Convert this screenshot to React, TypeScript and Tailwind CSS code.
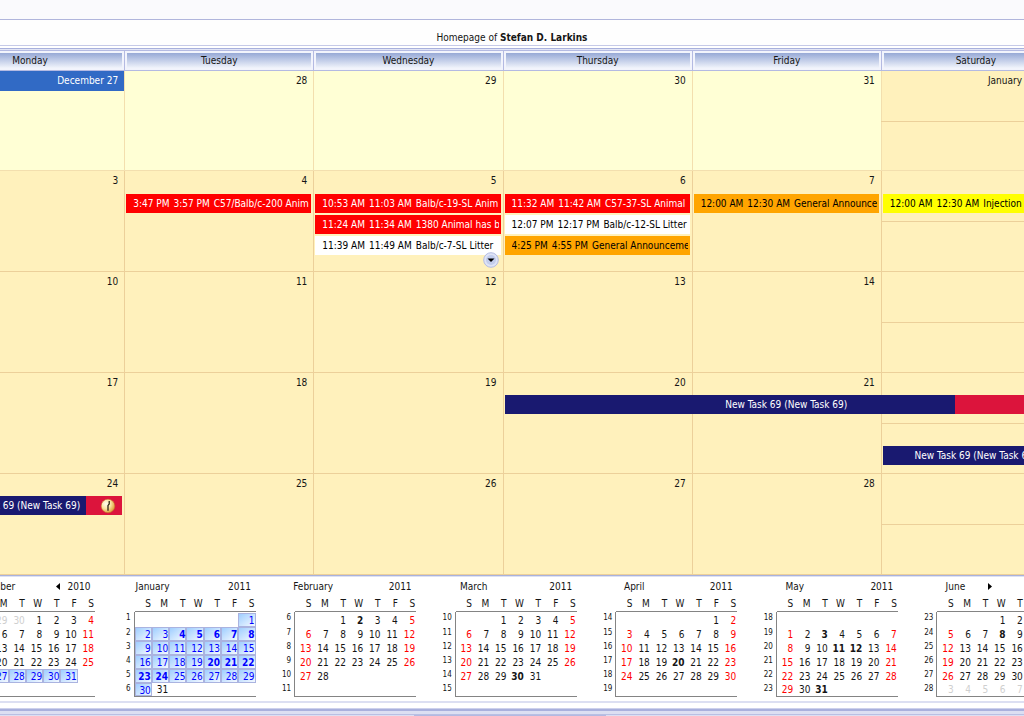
import clsx from "clsx";

type CalendarEvent = { start: string; end: string; title: string; tone: string };
type Day = { label: string; today?: boolean; events?: CalendarEvent[]; more?: boolean };

const RED = "bg-[#ff0000] text-white";
const WHITE = "bg-white text-black";
const ORANGE = "bg-[#ffa500] text-black";
const YELLOW = "bg-[#ffff00] text-black";

const weekdays = ["Monday", "Tuesday", "Wednesday", "Thursday", "Friday", "Saturday"];
const colStart = ["col-start-1", "col-start-2", "col-start-3", "col-start-4", "col-start-5", "col-start-6"];

const weeks: Day[][] = [
  [
    { label: "December 27", today: true },
    { label: "28" },
    { label: "29" },
    { label: "30" },
    { label: "31" },
    { label: "January" },
  ],
  [
    { label: "3" },
    { label: "4", events: [{ start: "3:47 PM", end: "3:57 PM", title: "C57/Balb/c-200 Anim", tone: RED }] },
    {
      label: "5",
      more: true,
      events: [
        { start: "10:53 AM", end: "11:03 AM", title: "Balb/c-19-SL Anim", tone: RED },
        { start: "11:24 AM", end: "11:34 AM", title: "1380 Animal has b", tone: RED },
        { start: "11:39 AM", end: "11:49 AM", title: "Balb/c-7-SL Litter", tone: WHITE },
      ],
    },
    {
      label: "6",
      events: [
        { start: "11:32 AM", end: "11:42 AM", title: "C57-37-SL Animal", tone: RED },
        { start: "12:07 PM", end: "12:17 PM", title: "Balb/c-12-SL Litter", tone: WHITE },
        { start: "4:25 PM", end: "4:55 PM", title: "General Announceme", tone: ORANGE },
      ],
    },
    { label: "7", events: [{ start: "12:00 AM", end: "12:30 AM", title: "General Announce", tone: ORANGE }] },
    { label: "", events: [{ start: "12:00 AM", end: "12:30 AM", title: "Injection", tone: YELLOW }] },
  ],
  [{ label: "10" }, { label: "11" }, { label: "12" }, { label: "13" }, { label: "14" }, { label: "" }],
  [{ label: "17" }, { label: "18" }, { label: "19" }, { label: "20" }, { label: "21" }, { label: "" }],
  [{ label: "24" }, { label: "25" }, { label: "26" }, { label: "27" }, { label: "28" }, { label: "" }],
];

type Month = {
  name: string;
  year: string;
  // cell of the first day; 7 leaves the first row empty
  first: number;
  days: number;
  firstWeek: number;
  bold?: number[];
  selected?: [number, number];
  arrow?: "prev" | "next";
  // days of the neighbouring months, drawn in grey
  before?: number[];
  after?: number[];
};

const months: Month[] = [
  { name: "December", year: "2010", first: 3, days: 31, firstWeek: 49, selected: [27, 31], arrow: "prev", before: [28, 29, 30] },
  { name: "January", year: "2011", first: 6, days: 31, firstWeek: 1, selected: [1, 30], bold: [4, 5, 6, 7, 8, 20, 21, 22, 23, 24] },
  { name: "February", year: "2011", first: 2, days: 28, firstWeek: 6, bold: [2] },
  { name: "March", year: "2011", first: 2, days: 31, firstWeek: 10, bold: [30] },
  { name: "April", year: "2011", first: 5, days: 30, firstWeek: 14, bold: [20] },
  { name: "May", year: "2011", first: 7, days: 31, firstWeek: 18, bold: [3, 11, 12, 31] },
  { name: "June", year: "2011", first: 3, days: 30, firstWeek: 23, bold: [8], arrow: "next", after: [3, 4, 5, 6, 7, 8, 9] },
];

function EventBar({ event }: { event: CalendarEvent }) {
  return (
    <button className={clsx("block h-[19px] w-full pl-[7px] pr-0.5 text-left", event.tone)}>
      <span className="flex gap-1 overflow-hidden whitespace-nowrap leading-[19px]">
        <span>{event.start}</span>
        <span>{event.end}</span>
        <span>{event.title}</span>
      </span>
    </button>
  );
}

function DayCell({ day, col, december }: { day: Day; col: number; december: boolean }) {
  const saturday = col === 5;
  return (
    <div
      className={clsx(
        "relative row-start-1 flex min-w-0 flex-col border-b border-l",
        colStart[col],
        december ? "border-[#f3dfae]" : "border-[#ecd09a]",
        december && !saturday ? "bg-[#ffffd5]" : "bg-[#fff1bc]"
      )}
    >
      <div
        className={clsx(
          "h-5 text-right leading-[19px]",
          day.today && "bg-[#316ac5] text-white",
          saturday ? "pr-12" : "pr-1.5"
        )}
      >
        {day.label}
      </div>
      {day.events && (
        <div className="mt-[3px] flex flex-col gap-0.5 pl-px pr-0.5">
          {day.events.map((e) => (
            <EventBar key={e.start} event={e} />
          ))}
        </div>
      )}
      {day.more && (
        <button aria-label="More events" className="absolute bottom-[3px] right-1 size-4">
          <svg viewBox="0 0 16 16" className="size-4">
            <circle cx="8" cy="8" r="7.3" fill="#dfe4f6" stroke="#b4bce2" />
            <circle cx="8" cy="8" r="5" fill="#c3cdec" />
            <path d="M4.5 6.5h7L8 10z" fill="#000" />
          </svg>
        </button>
      )}
    </div>
  );
}

function Week({ days, index }: { days: Day[]; index: number }) {
  const december = index === 0;
  return (
    <div className={clsx("grid grid-cols-6 grid-rows-1", december ? "h-[100px]" : "h-[101px]")}>
      {days.map((d, i) => (
        <DayCell key={i} day={d} col={i} december={december} />
      ))}
      {/* Saturday shares its column with Sunday */}
      <div className="pointer-events-none z-10 col-start-6 row-start-1 mt-[50px] h-px bg-[#ecd09a]" />
      {index === 3 && (
        <>
          <button className="z-10 col-span-3 col-start-4 row-start-1 mx-0.5 mt-[22px] grid h-[19px] grid-cols-[80%_20%] items-stretch bg-[#dc143c] text-white">
            <span className="col-start-1 row-start-1 bg-[#191970]" />
            <span className="col-span-2 col-start-1 row-start-1 text-center leading-[19px]">New Task 69 (New Task 69)</span>
          </button>
          <button className="z-10 col-start-6 row-start-1 mx-0.5 mt-[73px] h-[19px] bg-[#191970] text-center leading-[19px] text-white">
            New Task 69 (New Task 69)
          </button>
        </>
      )}
      {index === 4 && (
        <button className="z-10 col-start-1 row-start-1 mr-0.5 mt-[22px] flex h-[19px] bg-[#191970] text-white">
          <span className="min-w-0 flex-1 pr-1.5 text-right leading-[19px]">New Task 69 (New Task 69)</span>
          <span className="flex h-full w-9 items-center justify-center bg-[#dc143c] pl-2">
            <svg viewBox="0 0 16 16" className="size-4">
              <defs>
                <radialGradient id="clock-face" cx=".35" cy=".35" r=".7">
                  <stop offset="0" stopColor="#fffdf0" />
                  <stop offset=".5" stopColor="#fbe3a0" />
                  <stop offset="1" stopColor="#dc9a35" />
                </radialGradient>
              </defs>
              <circle cx="8" cy="8" r="6.8" fill="url(#clock-face)" stroke="#c07a2c" strokeWidth=".5" />
              <path d="M9.2 3v3L8 7.5v5.2" fill="none" stroke="#1c1608" strokeWidth="1.2" />
            </svg>
          </span>
        </button>
      )}
    </div>
  );
}

function MiniMonth({ month }: { month: Month }) {
  const rows = Array.from({ length: 6 }, (_, r) => Array.from({ length: 7 }, (_, c) => r * 7 + c - month.first + 1));
  return (
    <div className="w-[140px]">
      <div className="flex h-[19px] items-center pl-[7px]">
        <span className="flex w-[60px] justify-center">{month.name}</span>
        <span className="flex w-2.5 justify-center">
          {month.arrow === "next" && (
            <button aria-label="Next month">
              <svg viewBox="0 0 4 7" className="h-[7px] w-1">
                <path d="M0 0v7l4-3.5z" />
              </svg>
            </button>
          )}
        </span>
        <span className="flex flex-1 justify-end pr-[3px]">
          {month.arrow === "prev" && (
            <button aria-label="Previous month">
              <svg viewBox="0 0 4 7" className="h-[7px] w-1">
                <path d="M4 0v7L0 3.5z" />
              </svg>
            </button>
          )}
        </span>
        <span className="w-8 text-center">{month.year}</span>
      </div>
      <table className="w-full table-fixed border-separate border-spacing-0">
        <thead>
          <tr className="h-4">
            <th className="w-[19px] p-0" />
            {["S", "M", "T", "W", "T", "F", "S"].map((d, i) => (
              <th key={i} className="border-b border-[#848484] p-0 pr-px text-right font-normal leading-[15px]">
                {d}
              </th>
            ))}
          </tr>
        </thead>
        <tbody>
          {rows.map((row, r) => (
            <tr key={r} className={r === 0 ? "h-[15px]" : "h-3.5"}>
              <th className="border-r border-[#848484] p-0 pr-[3px] text-right align-top text-[8px] font-normal leading-[11px]">
                {month.firstWeek + r}
              </th>
              {row.map((n, c) => {
                const inside = n >= 1 && n <= month.days;
                const selected = !!month.selected && n >= month.selected[0] && n <= month.selected[1];
                const other = n < 1 ? month.before?.[c] : r === 5 ? month.after?.[c] : undefined;
                const weekend = c === 0 || c === 6;
                return (
                  <td
                    key={c}
                    className={clsx(
                      "p-0 text-right align-bottom",
                      r === 5 && "border-b border-b-[#848484]",
                      inside && month.bold?.includes(n) && "font-bold",
                      !inside && "text-[#cfcfcf]",
                      inside && !selected && weekend && "text-[#ff0000]",
                      selected && "text-[#0000ff]"
                    )}
                  >
                    {selected ? (
                      <span
                        className={clsx(
                          "block border border-[#aab3e0] bg-linear-to-br from-[#9fceff] to-[#f4f9ff] leading-[13px]",
                          r === 5 ? "h-[13px]" : "h-3.5"
                        )}
                      >
                        {n}
                      </span>
                    ) : (
                      <span className={clsx("block pr-px", r === 5 ? "h-[13px] leading-[13px]" : "h-3.5 leading-[15px]")}>
                        {inside ? n : other}
                      </span>
                    )}
                  </td>
                );
              })}
            </tr>
          ))}
        </tbody>
      </table>
    </div>
  );
}

export default function App() {
  return (
    <div className="w-full overflow-hidden bg-white font-['DejaVu_Sans_Condensed','DejaVu_Sans',sans-serif] text-[10px] text-[#151515]">
      <div className="h-5 border-b border-[#b0b5dc] bg-[#fafafd]" />
      <h1 className="h-[26px] border-b border-[#c6cae8] bg-[#fefefe] text-center leading-[36px]">
        Homepage of <b>Stefan D. Larkins</b>
      </h1>
      <div className="mt-0.5 h-0.5 border-t border-[#a8b0dc] bg-[#e3e6f6]" />

      <main className="-ml-[65px] -mr-[46px]">
        <div className="grid h-[21px] grid-cols-6">
          {weekdays.map((d) => (
            <div key={d} className="border border-r-0 border-[#b4bae2] bg-[#f2f4fc] p-0.5">
              <div className="h-full bg-linear-to-b from-[#97a9d6] to-[#f1f4fb] text-center leading-[15px]">{d}</div>
            </div>
          ))}
        </div>
        {weeks.map((days, i) => (
          <Week key={i} days={days} index={i} />
        ))}
      </main>

      <div className="h-0.5 border-t border-[#a9b2dc] bg-[#dde1f3]" />
      <section className="-ml-[45px] -mr-[55px] grid grid-cols-7 pb-1">
        {months.map((m) => (
          <MiniMonth key={m.name} month={m} />
        ))}
      </section>
      <div className="h-0.5 bg-[#dcdff2]" />
      <div className="mt-[5px] h-[3px] border-t border-[#cdd1ec] bg-[#a9b0dd]" />
      <div className="h-1 border-b border-[#b9bfe3] bg-[#dcdff2]" />
      <div className="grid h-px grid-cols-[414fr_192fr_418fr] bg-[#dcdff2]">
        <div className="col-start-2 bg-[#b3b9e1]" />
      </div>
    </div>
  );
}
